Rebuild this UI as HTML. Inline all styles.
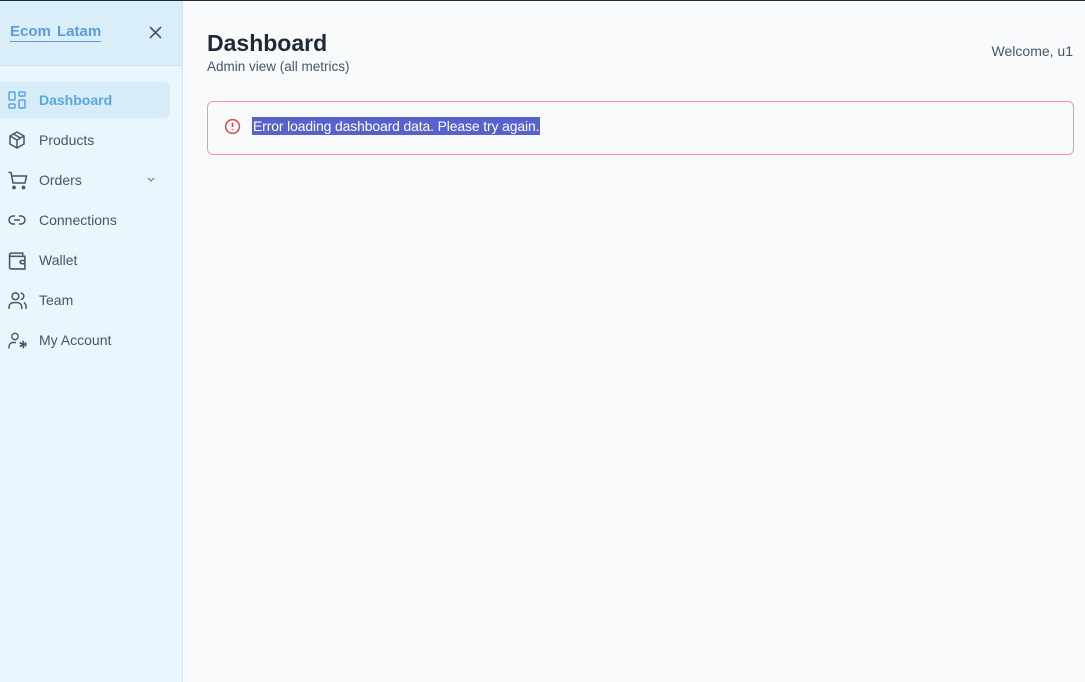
<!DOCTYPE html>
<html><head><style>
*{box-sizing:border-box;margin:0;padding:0}
body{width:1085px;height:682px;overflow:hidden;font-family:"Liberation Sans",sans-serif;background:#f8fafc;position:relative}
.top{position:absolute;left:0;top:0;width:1085px;height:1px;background:#1e293b}
.side{position:absolute;left:0;top:1px;width:183px;height:681px;background:#eaf6fd;border-right:1px solid #d5e6f0}
.head{height:65px;background:#daeef9;border-bottom:1px solid #cfe3ef;position:relative}
.logo{position:absolute;left:10px;top:23px;font-size:15px;font-weight:bold;color:#5b9be0;border-bottom:1px solid #5b9be0;line-height:16px;padding-bottom:1px;white-space:nowrap;word-spacing:2px}
.x{position:absolute;left:148px;top:24px}
.item{position:absolute;left:0;width:170px;height:36px;display:flex;align-items:center;font-size:14px;color:#475569}
.item svg{position:absolute;left:8px}
.item span{position:absolute;left:39px}
.act{background:#d6ecf9;border-radius:0 6px 6px 0;color:#5aa6e0;font-weight:bold}
h1{position:absolute;left:207px;top:30px;font-size:23px;color:#1f2937;font-weight:bold}
.sub{position:absolute;left:207px;top:59px;font-size:13.5px;color:#475569}
.wel{position:absolute;right:12px;top:43px;font-size:14px;color:#475569}
.err{position:absolute;left:207px;top:101px;width:867px;height:54px;border:1px solid #ef9a9a;border-radius:6px;background:#f8fafc}
.err svg{position:absolute;left:16px;top:16px}
.err span{position:absolute;left:44px;top:15px;font-size:13.9px;color:#fff;background:#5762cc;padding:0 1px;line-height:18px;letter-spacing:-0.1px}
</style></head><body>
<div class="top"></div>
<div class="side">
<div class="head"><div class="logo">Ecom Latam</div>
<svg class="x" width="15" height="15" viewBox="0 0 15 15" stroke="#475569" stroke-width="1.6"><path d="M2 2L13 13M13 2L2 13"/></svg></div>
<div class="item act" style="top:81px"><svg width="18" height="18" viewBox="0 0 18 18" fill="none" stroke="#5aa6e0" stroke-width="1.5"><rect x="1" y="1" width="6" height="8" rx="1"/><rect x="11" y="1" width="6" height="4" rx="1"/><rect x="11" y="9" width="6" height="8" rx="1"/><rect x="1" y="13" width="6" height="4" rx="1"/></svg><span>Dashboard</span></div>
<div class="item" style="top:121px"><svg width="18" height="18" viewBox="0 0 18 18" fill="none" stroke="#475569" stroke-width="1.5"><path d="M9 1L16 5V13L9 17L2 13V5Z M2 5L9 9L16 5 M9 9V17 M5.5 3L12.5 7"/></svg><span>Products</span></div>
<div class="item" style="top:161px"><svg width="20" height="19" viewBox="0 0 20 19" fill="none" stroke="#475569" stroke-width="1.5"><path d="M0.5 1.5H3L5 12H17L18.5 5H4"/><circle cx="6" cy="16.5" r="1.1" fill="#475569"/><circle cx="15.5" cy="16.5" r="1.1" fill="#475569"/></svg><span>Orders</span><svg style="left:146px" width="10" height="6" viewBox="0 0 10 6" fill="none" stroke="#64748b"><path d="M2 1L5 4L8 1"/></svg></div>
<div class="item" style="top:201px"><svg width="18" height="18" viewBox="0 0 18 18" fill="none" stroke="#475569" stroke-width="1.5"><path d="M7 5H5A4 4 0 0 0 5 13H7M11 5H13A4 4 0 0 1 13 13H11M6 9H12"/></svg><span>Connections</span></div>
<div class="item" style="top:241px"><svg width="19" height="19" viewBox="0 0 18 18" fill="none" stroke="#475569" stroke-width="1.5"><path d="M14 4V2H3A1.5 1.5 0 0 0 3 5H16V17H3A1.5 1.5 0 0 1 1.5 15.5V3.5"/><path d="M16 9H13A1.5 1.5 0 0 0 13 12H16"/></svg><span>Wallet</span></div>
<div class="item" style="top:281px"><svg width="19" height="19" viewBox="0 0 18 18" fill="none" stroke="#475569" stroke-width="1.4"><circle cx="7" cy="5" r="3.2"/><path d="M1 17V15A4 4 0 0 1 5 11H9A4 4 0 0 1 13 15V17M12 2A3 3 0 0 1 12 8M15 11A4 4 0 0 1 17 15V17"/></svg><span>Team</span></div>
<div class="item" style="top:321px"><svg width="20" height="19" viewBox="0 0 20 18" fill="none" stroke="#475569" stroke-width="1.4"><circle cx="7" cy="5" r="3.2"/><path d="M1 17V15A4 4 0 0 1 5 11H8"/><circle cx="15" cy="13" r="2.5" stroke-width="2.4" stroke-dasharray="1.6 1.1"/><circle cx="15" cy="13" r="1" fill="#475569"/></svg><span>My Account</span></div>
</div>
<h1>Dashboard</h1>
<div class="sub">Admin view (all metrics)</div>
<div class="wel">Welcome, u1</div>
<div class="err"><svg width="17" height="17" viewBox="0 0 16 16" fill="none" stroke="#e04848" stroke-width="1.4"><circle cx="8" cy="8" r="6.5"/><path d="M8 4.5V8.5M8 10.5V11.5"/></svg><span>Error loading dashboard data. Please try again.</span></div>
</body></html>
